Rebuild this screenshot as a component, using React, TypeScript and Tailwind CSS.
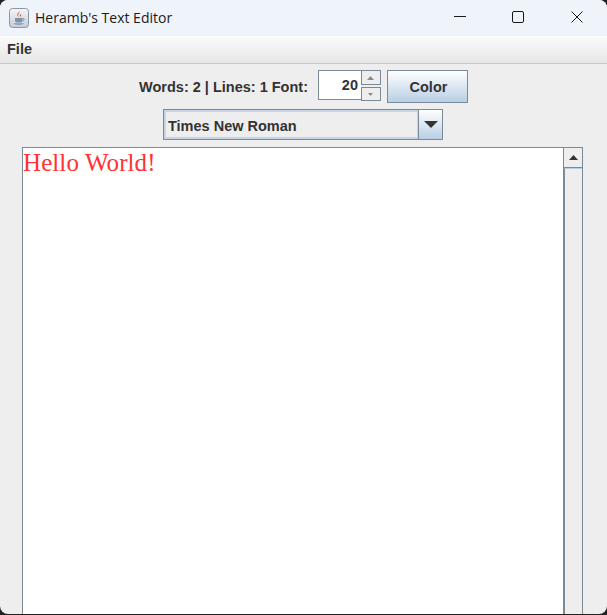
export default function App() {
  const sans = "font-['Liberation_Sans',Arial,sans-serif]";
  return (
    <div className="h-[615px] w-[607px] bg-[#222222] overflow-hidden">
      <div className="h-[614px] w-[607px] rounded-[8px] overflow-hidden flex flex-col bg-[#eeeeee]">
        <div className="h-[36px] shrink-0 bg-[#eff3fa] flex items-center pl-[9px]">
          <svg width="20" height="20" viewBox="0 0 20 20" className="shrink-0">
            <defs>
              <linearGradient id="ic" x1="0" y1="0" x2="0" y2="1">
                <stop offset="0" stopColor="#f4f6f9" />
                <stop offset="1" stopColor="#c4ccd8" />
              </linearGradient>
            </defs>
            <rect x="0.5" y="0.5" width="19" height="19" rx="3" fill="url(#ic)" stroke="#8c97a6" />
            <path d="M10.5 3c1 1.6-2 2.6-1.2 4.6.3.7.8 1 1 1.4-1.2-.6-2.6-1.6-2-3C8.800 4.800 10.600 4.300 10.500 3z" fill="#e2672a" />
            <path d="M12.500 5.500c-1.500.7-2 1.500-1.400 2.500.2.400.3.700.1 1 1-.5 1.200-1.200.8-1.900-.3-.6-.2-1.100.5-1.600z" fill="#e2672a" />
            <path d="M6 10h7.500v2.500c0 1.300-1 2-2 2H8c-1 0-2-.7-2-2z" fill="#7d93ad" />
            <path d="M13.500 10.500h1c1 0 1 2-.8 2.300" fill="none" stroke="#5f7a99" strokeWidth="0.8" />
            <path d="M4.500 15.500h10.500c-1 1.300-9.500 1.300-10.500 0z" fill="#5f7a99" />
          </svg>
          <span className="ml-[6px] font-['Open_Sans',sans-serif] text-[14px] leading-none text-[#1a1a1a] whitespace-nowrap">Heramb's Text Editor</span>
          <div className="ml-auto flex items-center h-full pr-px pb-[2px]">
            <div className="w-[56px] h-full flex items-center justify-center">
              <svg width="12" height="12" viewBox="0 0 12 12"><path d="M0 5.500h12" stroke="#1a1a1a" strokeWidth="1" /></svg>
            </div>
            <div className="w-[59px] h-full flex items-center justify-center">
              <svg width="12" height="12" viewBox="0 0 12 12"><rect x="0.500" y="0.500" width="11" height="11" rx="1.500" fill="none" stroke="#1a1a1a" strokeWidth="1" /></svg>
            </div>
            <div className="w-[59px] h-full flex items-center justify-center">
              <svg width="12" height="12" viewBox="0 0 12 12"><path d="M0.500 0.500l11 11M11.500 0.500l-11 11" stroke="#1a1a1a" strokeWidth="1" /></svg>
            </div>
          </div>
        </div>

        <div className={`h-[28px] shrink-0 bg-gradient-to-b from-[#fbfbfb] to-[#e6e6e6] border-b border-[#c8c8c8] flex items-center pl-[7px] ${sans} font-bold text-[14.5px] text-[#333333]`}>
          File
        </div>

        <div className="flex-1 min-h-0 flex flex-col items-center pt-[6px]">
          <div className={`flex items-start ${sans} font-bold text-[14.5px] text-[#333333] h-[33px]`}>
            <span className="mt-[10px] leading-none whitespace-nowrap">Words: 2 | Lines: 1 Font:</span>
            <div className="ml-[10px] flex h-[31px]">
              <div className="w-[43px] h-[30px] bg-white border-l border-t border-b border-[#7a8a99] flex items-center justify-end pr-[3px] pt-[2px]">20</div>
              <div className="flex flex-col w-[20px] gap-[2px]">
                <div className="h-[15px] border border-[#7a8a99] bg-[#eeeeee] flex items-center justify-center">
                  <svg width="7" height="4" viewBox="0 0 7 4"><path d="M3.500 0L7 4H0z" fill="#8a8a8a" /></svg>
                </div>
                <div className="h-[14px] border border-[#7a8a99] bg-[#eeeeee] flex items-center justify-center">
                  <svg width="5" height="3" viewBox="0 0 5 3"><path d="M0 0h5L2.500 3z" fill="#8a8a8a" /></svg>
                </div>
              </div>
            </div>
            <div className="ml-[6px] w-[81px] h-[33px] border border-[#7a8a99] bg-gradient-to-b from-[#ffffff] to-[#b8cfe5] flex items-center justify-center pt-[3px] pl-[2px]">Color</div>
          </div>

          <div className={`mt-[6px] mr-px w-[280px] h-[31px] shrink-0 border border-[#7a8a99] flex ${sans} font-bold text-[14.5px] text-[#333333]`}>
            <div className="flex-1 border-2 border-r-[1px] border-[#c5d5e5] bg-[#eeeeee] flex items-center pl-[2px] pt-[4px] whitespace-nowrap">Times New Roman</div>
            <div className="w-[24px] border-l border-[#7a8a99] bg-gradient-to-b from-[#ffffff] to-[#b8cfe5] flex items-center justify-center">
              <svg width="14" height="7" viewBox="0 0 14 7"><path d="M0 0h14L7 7z" fill="#333333" /></svg>
            </div>
          </div>

          <div className="mt-[7px] mr-[2px] w-[561px] flex-1 min-h-0 border-l border-t border-r border-[#7a8a99] flex">
            <div className="flex-1 bg-white font-['Liberation_Serif','Times_New_Roman',serif] text-[25px] tracking-[0.09px] leading-[29px] text-[#ff3333] whitespace-nowrap">Hello World!</div>
            <div className="w-[19px] flex flex-col border-l border-[#7a8a99]">
              <div className="h-[20px] shrink-0 bg-[#eeeeee] border-b border-[#7a8a99] flex items-center justify-center">
                <svg width="9" height="5" viewBox="0 0 9 5"><path d="M4.500 0L9 5H0z" fill="#333333" /></svg>
              </div>
              <div className="flex-1 bg-[#eeeeee] border-t border-l border-t-[#b8cfe5] border-l-[#7a8a99]" />
            </div>
          </div>
        </div>
      </div>
    </div>
  );
}
